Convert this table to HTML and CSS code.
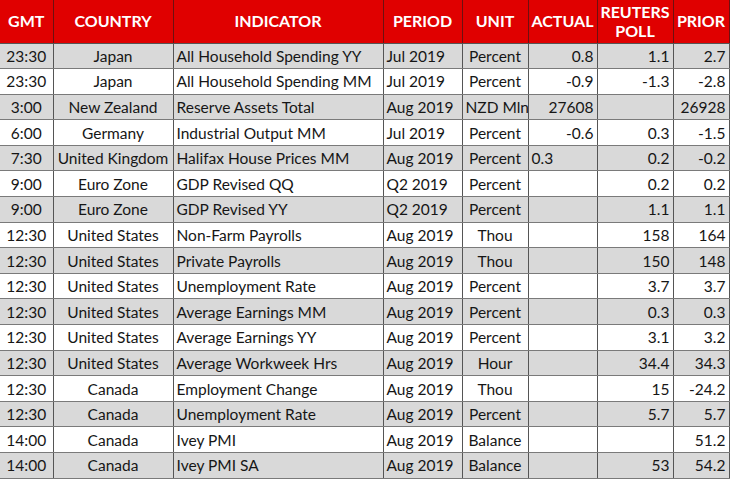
FILE: index.html
```html
<!DOCTYPE html>
<html>
<head>
<meta charset="utf-8">
<link rel="stylesheet" href="styles.css">
</head>
<body>
<table class="cal">
<colgroup>
<col class="c-gmt"><col class="c-country"><col class="c-ind"><col class="c-period"><col class="c-unit"><col class="c-act"><col class="c-poll"><col class="c-prior">
</colgroup>
<thead>
<tr>
<th>GMT</th><th>COUNTRY</th><th>INDICATOR</th><th>PERIOD</th><th>UNIT</th><th>ACTUAL</th><th class="two">REUTERS<br>POLL</th><th>PRIOR</th>
</tr>
</thead>
<tbody>
<tr class="g"><td class="ctr">23:30</td><td class="ctr">Japan</td><td>All Household Spending YY</td><td>Jul 2019</td><td class="ctr">Percent</td><td class="num">0.8</td><td class="num">1.1</td><td class="num">2.7</td></tr>
<tr><td class="ctr">23:30</td><td class="ctr">Japan</td><td>All Household Spending MM</td><td>Jul 2019</td><td class="ctr">Percent</td><td class="num">-0.9</td><td class="num">-1.3</td><td class="num">-2.8</td></tr>
<tr class="g"><td class="ctr">3:00</td><td class="ctr">New Zealand</td><td>Reserve Assets Total</td><td>Aug 2019</td><td class="ctr">NZD Mln</td><td class="num">27608</td><td class="num"></td><td class="num">26928</td></tr>
<tr><td class="ctr">6:00</td><td class="ctr">Germany</td><td>Industrial Output MM</td><td>Jul 2019</td><td class="ctr">Percent</td><td class="num">-0.6</td><td class="num">0.3</td><td class="num">-1.5</td></tr>
<tr class="g"><td class="ctr">7:30</td><td class="ctr">United Kingdom</td><td>Halifax House Prices MM</td><td>Aug 2019</td><td class="ctr">Percent</td><td class="lft">0.3</td><td class="num">0.2</td><td class="num">-0.2</td></tr>
<tr><td class="ctr">9:00</td><td class="ctr">Euro Zone</td><td>GDP Revised QQ</td><td>Q2 2019</td><td class="ctr">Percent</td><td class="num"></td><td class="num">0.2</td><td class="num">0.2</td></tr>
<tr class="g"><td class="ctr">9:00</td><td class="ctr">Euro Zone</td><td>GDP Revised YY</td><td>Q2 2019</td><td class="ctr">Percent</td><td class="num"></td><td class="num">1.1</td><td class="num">1.1</td></tr>
<tr><td class="ctr">12:30</td><td class="ctr">United States</td><td>Non-Farm Payrolls</td><td>Aug 2019</td><td class="ctr">Thou</td><td class="num"></td><td class="num">158</td><td class="num">164</td></tr>
<tr class="g"><td class="ctr">12:30</td><td class="ctr">United States</td><td>Private Payrolls</td><td>Aug 2019</td><td class="ctr">Thou</td><td class="num"></td><td class="num">150</td><td class="num">148</td></tr>
<tr><td class="ctr">12:30</td><td class="ctr">United States</td><td>Unemployment Rate</td><td>Aug 2019</td><td class="ctr">Percent</td><td class="num"></td><td class="num">3.7</td><td class="num">3.7</td></tr>
<tr class="g"><td class="ctr">12:30</td><td class="ctr">United States</td><td>Average Earnings MM</td><td>Aug 2019</td><td class="ctr">Percent</td><td class="num"></td><td class="num">0.3</td><td class="num">0.3</td></tr>
<tr><td class="ctr">12:30</td><td class="ctr">United States</td><td>Average Earnings YY</td><td>Aug 2019</td><td class="ctr">Percent</td><td class="num"></td><td class="num">3.1</td><td class="num">3.2</td></tr>
<tr class="g"><td class="ctr">12:30</td><td class="ctr">United States</td><td>Average Workweek Hrs</td><td>Aug 2019</td><td class="ctr">Hour</td><td class="num"></td><td class="num">34.4</td><td class="num">34.3</td></tr>
<tr><td class="ctr">12:30</td><td class="ctr">Canada</td><td>Employment Change</td><td>Aug 2019</td><td class="ctr">Thou</td><td class="num"></td><td class="num">15</td><td class="num">-24.2</td></tr>
<tr class="g"><td class="ctr">12:30</td><td class="ctr">Canada</td><td>Unemployment Rate</td><td>Aug 2019</td><td class="ctr">Percent</td><td class="num"></td><td class="num">5.7</td><td class="num">5.7</td></tr>
<tr><td class="ctr">14:00</td><td class="ctr">Canada</td><td>Ivey PMI</td><td>Aug 2019</td><td class="ctr">Balance</td><td class="num"></td><td class="num"></td><td class="num">51.2</td></tr>
<tr class="g"><td class="ctr">14:00</td><td class="ctr">Canada</td><td>Ivey PMI SA</td><td>Aug 2019</td><td class="ctr">Balance</td><td class="num"></td><td class="num">53</td><td class="num">54.2</td></tr>
</tbody>
</table>
</body>
</html>
```
FILE: styles.css
```css
html, body {
  margin: 0;
  padding: 0;
  background: #ffffff;
}
body {
  font-family: Lato, "Liberation Sans", sans-serif;
  color: #161616;
}
.cal {
  border-collapse: collapse;
  table-layout: fixed;
  width: 729px;
}
.c-gmt { width: 53px; }
.c-country { width: 120px; }
.c-ind { width: 210px; }
.c-period { width: 79px; }
.c-unit { width: 66px; }
.c-act { width: 69px; }
.c-poll { width: 76px; }
.c-prior { width: 56px; }

.cal th {
  background: #e00000;
  color: #ffffff;
  font-weight: 700;
  font-size: 16px;
  height: 42.5px;
  padding: 0;
  text-align: center;
  border-left: 1px solid #6e1010;
  border-bottom: 1px solid #555555;
  line-height: 20px;
  white-space: nowrap;
}
.cal th:first-child { border-left: none; }
.cal th:last-child { border-right: 1px solid #6e1010; }
.cal th.two { line-height: 19px; }

.cal td {
  height: 24.6px;
  padding: 0 3px;
  font-size: 15.5px;
  line-height: 18px;
  border-left: 1px solid #555555;
  border-bottom: 1px solid #7a7a7a;
  white-space: nowrap;
  overflow: hidden;
}
.cal td:first-child { border-left: none; }
.cal td:last-child { border-right: 1px solid #555555; }
.cal tr.g td { background: #d9d9d9; }
.cal td.ctr { text-align: center; }
.cal td.num { text-align: right; }
.cal td.lft { text-align: left; }
```
